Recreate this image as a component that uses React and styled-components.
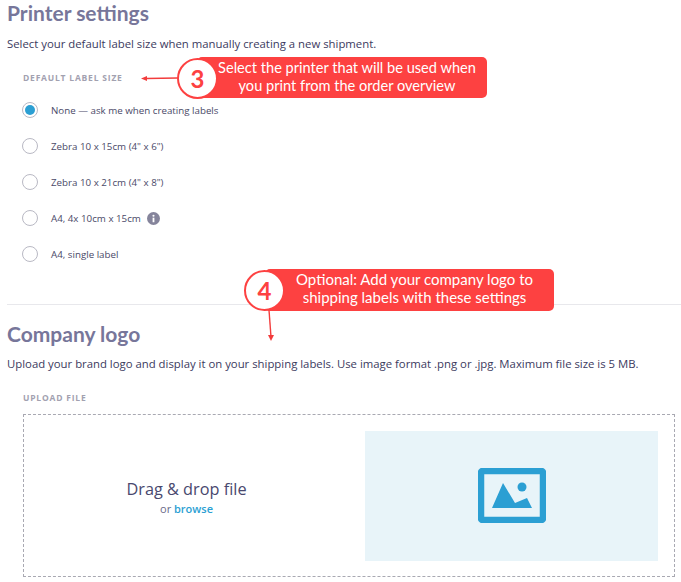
import React from 'react';
import styled, { createGlobalStyle } from 'styled-components';

const GlobalStyle = createGlobalStyle`
    html, body {
        margin: 0;
        background: #fff;
        font-family: "Open Sans", "Liberation Sans", sans-serif;
    }
`;

const Page = styled.div`
    position: relative;
    width: 681px;
    height: 582px;
    overflow: hidden;
    box-sizing: border-box;
    padding-left: 7px;
`;

const Section = styled.section`
    display: flex;
    flex-direction: column;
    height: ${p => p.$height}px;
    padding-top: ${p => p.$top}px;
    box-sizing: border-box;
`;

const Divided = styled(Section)`
    border-top: 1px solid #e8e8ec;
`;

const Title = styled.h2`
    margin: 0;
    font-family: Lato, "Open Sans", sans-serif;
    font-size: 21px;
    line-height: 26px;
    font-weight: 700;
    color: #77769a;
`;

const Description = styled.p`
    margin: ${p => p.$top}px 0 0;
    font-size: 11.35px;
    line-height: 18px;
    color: #3b3a5e;
`;

const FieldLabel = styled.div`
    margin: 19px 0 0 16px;
    font-size: 8.5px;
    line-height: 12px;
    font-weight: 700;
    letter-spacing: 0.8px;
    color: #a2a1b0;
`;

const RadioList = styled.div`
    display: flex;
    flex-direction: column;
    gap: 20px;
    margin: 18px 0 0 15px;
`;

const RadioRow = styled.label`
    display: flex;
    align-items: center;
    height: 16px;
    font-size: 9.75px;
    color: #4a4968;
`;

const RadioDot = styled.span`
    flex: none;
    display: flex;
    align-items: center;
    justify-content: center;
    width: 16px;
    height: 16px;
    margin-right: 13px;
    border: 1px solid #b9b9c4;
    border-radius: 50%;
    box-sizing: border-box;
    background: #fff;

    &::after {
        content: '';
        display: ${p => (p.$checked ? 'block' : 'none')};
        width: 10px;
        height: 10px;
        border-radius: 50%;
        background: #2b9fd3;
    }
`;

const InfoIcon = styled.svg`
    margin-left: 6px;
    width: 13px;
    height: 13px;
`;

const DropZone = styled.div`
    display: flex;
    align-items: center;
    width: 652px;
    height: 163px;
    margin: 10px 0 0 16px;
    padding: 15px 16px 15px 0;
    border: 1px dashed #a9a9b2;
    box-sizing: border-box;
`;

const DropText = styled.div`
    flex: 1;
    display: flex;
    flex-direction: column;
    align-items: center;
    padding: 4px 16px 0 0;
`;

const DropTitle = styled.div`
    font-size: 16.3px;
    line-height: 21px;
    color: #49486e;
`;

const DropHint = styled.div`
    font-size: 11px;
    line-height: 17px;
    color: #6b6a88;
`;

const BrowseLink = styled.span`
    color: #2b9fd3;
    font-weight: 600;
`;

const Preview = styled.div`
    flex: none;
    display: flex;
    align-items: center;
    justify-content: center;
    width: 293px;
    height: 130px;
    background: #e8f4f9;
`;

const Callout = styled.div`
    position: absolute;
    left: ${p => p.$left}px;
    top: ${p => p.$top}px;
    width: ${p => p.$width}px;
    height: ${p => p.$height}px;
    border-radius: 5px;
    padding: 0 0 ${p => p.$lift}px 10px;
    box-sizing: border-box;
    display: flex;
    align-items: center;
    justify-content: center;
    text-align: center;
    background: #fd4141;
    color: #fff;
    font-family: Lato, "Open Sans", sans-serif;
    font-size: ${p => p.$size}px;
    line-height: 17.5px;
    white-space: nowrap;
`;

const StepBadge = styled.div`
    position: absolute;
    left: ${p => p.$left}px;
    top: ${p => p.$top}px;
    width: 41px;
    height: 41px;
    border: 2px solid #fd4141;
    border-radius: 50%;
    box-sizing: border-box;
    background: #fff;
    color: #fd4141;
    display: flex;
    align-items: center;
    justify-content: center;
    font-family: Lato, "Open Sans", sans-serif;
    font-size: 24px;
    font-weight: 700;
`;

const ArrowLayer = styled.svg`
    position: absolute;
    left: 0;
    top: 0;
    width: 681px;
    height: 582px;
    pointer-events: none;
`;

const options = [
    { label: 'None — ask me when creating labels', checked: true },
    { label: 'Zebra 10 x 15cm (4" x 6")' },
    { label: 'Zebra 10 x 21cm (4" x 8")' },
    { label: 'A4, 4x 10cm x 15cm', info: true },
    { label: 'A4, single label' },
];

const App = () => {
    return (
        <Page>
            <GlobalStyle />
            <Section $height={304} $top={0}>
                <Title>Printer settings</Title>
                <Description $top={9}>Select your default label size when manually creating a new shipment.</Description>
                <FieldLabel>DEFAULT LABEL SIZE</FieldLabel>
                <RadioList>
                    {options.map(o => (
                        <RadioRow key={o.label}>
                            <RadioDot $checked={o.checked} />
                            {o.label}
                            {o.info && (
                                <InfoIcon viewBox="0 0 16 16">
                                    <circle cx="8" cy="8" r="8" fill="#85849b" />
                                    <rect x="6.9" y="7" width="2.2" height="5.6" fill="#fff" />
                                    <circle cx="8" cy="4.6" r="1.3" fill="#fff" />
                                </InfoIcon>
                            )}
                        </RadioRow>
                    ))}
                </RadioList>
            </Section>
            <Divided $height={278} $top={16}>
                <Title>Company logo</Title>
                <Description $top={8}>
                    Upload your brand logo and display it on your shipping labels. Use image format .png or .jpg. Maximum file size is 5 MB.
                </Description>
                <FieldLabel>UPLOAD FILE</FieldLabel>
                <DropZone>
                    <DropText>
                        <DropTitle>Drag &amp; drop file</DropTitle>
                        <DropHint>or <BrowseLink>browse</BrowseLink></DropHint>
                    </DropText>
                    <Preview>
                        <svg width="68" height="55" viewBox="0 0 68 55">
                            <rect x="3" y="3" width="62" height="49" rx="1.5" fill="none" stroke="#2b9fd3" strokeWidth="6.5" />
                            <path d="M14 40 L25 15 L37 35 L49 30 L54 40 Z" fill="#2b9fd3" />
                            <circle cx="44" cy="19" r="4.5" fill="#2b9fd3" />
                        </svg>
                    </Preview>
                </DropZone>
            </Divided>

            <ArrowLayer viewBox="0 0 681 582">
                <path d="M178 78 L146 78.5" stroke="#f23c3c" strokeWidth="1.4" fill="none" />
                <path d="M141 78.5 L147 76 L147 81 Z" fill="#f23c3c" />
                <path d="M269 310 L271 337" stroke="#f23c3c" strokeWidth="1.4" fill="none" />
                <path d="M271 341 L268 335 L274 335 Z" fill="#f23c3c" />
            </ArrowLayer>

            <Callout $left={197} $top={57} $width={290} $height={41} $lift={2} $size={14.6}>
                Select the printer that will be used when<br />you print from the order overview
            </Callout>
            <StepBadge $left={177} $top={58}>3</StepBadge>
            <Callout $left={265} $top={269} $width={289} $height={42} $lift={3} $size={15}>
                Optional: Add your company logo to<br />shipping labels with these settings
            </Callout>
            <StepBadge $left={244} $top={270}>4</StepBadge>
        </Page>
    );
};

export default App;
